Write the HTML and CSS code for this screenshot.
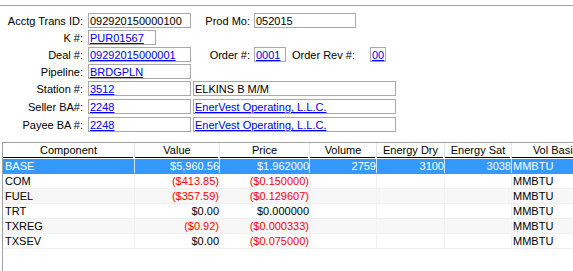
FILE: index.html
```html
<!DOCTYPE html>
<html>
<head>
<meta charset="utf-8">
<link rel="stylesheet" href="styles.css">
</head>
<body>
<div class="topline"></div>
<div class="form">
  <div class="group g1">
    <div class="row">
      <span class="lbl">Acctg Trans ID:</span>
      <span class="box w103">092920150000100</span>
      <span class="lbl2">Prod Mo:</span>
      <span class="box w102">052015</span>
    </div>
    <div class="row">
      <span class="lbl">K #:</span>
      <span class="box w68"><a href="#">PUR01567</a></span>
    </div>
    <div class="row">
      <span class="lbl">Deal #:</span>
      <span class="box w103"><a href="#">09292015000001</a></span>
      <span class="lbl2">Order #:</span>
      <span class="box w32"><a href="#">0001</a></span>
      <span class="lbl3">Order Rev #:</span>
      <span class="box w16"><a href="#">00</a></span>
    </div>
    <div class="row">
      <span class="lbl">Pipeline:</span>
      <span class="box w103"><a href="#">BRDGPLN</a></span>
    </div>
  </div>
  <div class="group g2">
    <div class="row">
      <span class="lbl">Station #:</span>
      <span class="box w103"><a href="#">3512</a></span>
      <span class="box wide">ELKINS B M/M</span>
    </div>
    <div class="row">
      <span class="lbl">Seller BA#:</span>
      <span class="box w103"><a href="#">2248</a></span>
      <span class="box wide"><a href="#">EnerVest Operating, L.L.C.</a></span>
    </div>
    <div class="row">
      <span class="lbl">Payee BA #:</span>
      <span class="box w103"><a href="#">2248</a></span>
      <span class="box wide"><a href="#">EnerVest Operating, L.L.C.</a></span>
    </div>
  </div>
</div>

<div class="grid">
  <div class="ghead">
    <div class="hc">Component</div>
    <div class="hc">Value</div>
    <div class="hc">Price</div>
    <div class="hc">Volume</div>
    <div class="hc">Energy Dry</div>
    <div class="hc">Energy Sat</div>
    <div class="hc">Vol Basis</div>
  </div>
  <div class="grow sel">
    <div class="c l">BASE</div>
    <div class="c r">$5,960.56</div>
    <div class="c r">$1.962000</div>
    <div class="c r">2759</div>
    <div class="c r">3100</div>
    <div class="c r">3038</div>
    <div class="c b">MMBTU</div>
  </div>
  <div class="grow">
    <div class="c l">COM</div>
    <div class="c r neg">($413.85)</div>
    <div class="c r neg">($0.150000)</div>
    <div class="c r"></div>
    <div class="c r"></div>
    <div class="c r"></div>
    <div class="c b">MMBTU</div>
  </div>
  <div class="grow alt">
    <div class="c l">FUEL</div>
    <div class="c r neg">($357.59)</div>
    <div class="c r neg">($0.129607)</div>
    <div class="c r"></div>
    <div class="c r"></div>
    <div class="c r"></div>
    <div class="c b">MMBTU</div>
  </div>
  <div class="grow">
    <div class="c l">TRT</div>
    <div class="c r">$0.00</div>
    <div class="c r">$0.000000</div>
    <div class="c r"></div>
    <div class="c r"></div>
    <div class="c r"></div>
    <div class="c b">MMBTU</div>
  </div>
  <div class="grow alt">
    <div class="c l">TXREG</div>
    <div class="c r neg">($0.92)</div>
    <div class="c r neg">($0.000333)</div>
    <div class="c r"></div>
    <div class="c r"></div>
    <div class="c r"></div>
    <div class="c b">MMBTU</div>
  </div>
  <div class="grow">
    <div class="c l">TXSEV</div>
    <div class="c r">$0.00</div>
    <div class="c r neg">($0.075000)</div>
    <div class="c r"></div>
    <div class="c r"></div>
    <div class="c r"></div>
    <div class="c b">MMBTU</div>
  </div>
</div>
</body>
</html>
```

FILE: styles.css
```css
html, body {
  margin: 0;
  padding: 0;
  background: #ffffff;
  overflow: hidden;
}
body {
  width: 573px;
  height: 271px;
  font-family: "Liberation Sans", Arial, sans-serif;
  font-size: 11px;
  color: #000;
}
.topline {
  height: 1px;
  margin-top: 5px;
  background: #a0a0a0;
}
.form {
  padding-top: 7px;
}
.group {
  display: flex;
  flex-direction: column;
}
.g1 { gap: 2px; }
.g2 { gap: 3px; margin-top: 2px; }
.row {
  display: flex;
  height: 15px;
  white-space: nowrap;
}
.lbl {
  width: 83px;
  margin-right: 5px;
  text-align: right;
  line-height: 14px;
  padding-top: 1px;
}
.lbl2 {
  width: 59px;
  margin-right: 4px;
  text-align: right;
  line-height: 14px;
  padding-top: 1px;
}
.lbl3 {
  width: 78px;
  margin-left: 6px;
  line-height: 14px;
  padding-top: 1px;
}
.box {
  box-sizing: border-box;
  height: 15px;
  border: 1px solid #a9a9a9;
  padding-left: 1px;
  line-height: 14px;
  overflow: visible;
}
.w103 { width: 103px; }
.w102 { width: 102px; }
.w68 { width: 68px; }
.w32 { width: 32px; }
.w16 { width: 16px; }
.wide { width: 203px; margin-left: 2px; }
.box a {
  color: #0000ee;
  text-decoration: underline;
}

.grid {
  box-sizing: border-box;
  margin-top: 10px;
  margin-left: 2px;
  height: 129px;
  border-left: 1px solid #a0a0a0;
  border-top: 1px solid #a0a0a0;
  overflow: hidden;
  width: 620px;
}
.ghead, .grow {
  display: grid;
  grid-template-columns: 132px 85px 90px 67px 68px 67px 88px;
}
.ghead {
  height: 15px;
  margin-bottom: 1px;
}
.hc {
  border-right: 1px solid #e5e5e5;
  text-align: center;
  line-height: 14px;
  white-space: nowrap;
  overflow: hidden;
  background: linear-gradient(#000, #000) left bottom / calc(100% - 1px) 1px no-repeat;
}
.grow {
  height: 15px;
  box-sizing: border-box;
  border-bottom: 1px solid #f0f0f0;
}
.grow.alt {
  background: #f7f7f7;
}
.grow.sel {
  background: #3399ff;
  color: #ffffff;
  border-bottom-color: #3399ff;
}
.c {
  border-right: 1px solid #f0f0f0;
  padding-top: 1px;
  line-height: 13px;
  white-space: nowrap;
  overflow: hidden;
}
.sel .c {
  border-right-color: #cfe5ff;
}
.c.l { padding-left: 2px; }
.c.r { text-align: right; padding-right: 0; }
.c.b { padding-left: 1px; }
.neg { color: #ff0000; }
```
